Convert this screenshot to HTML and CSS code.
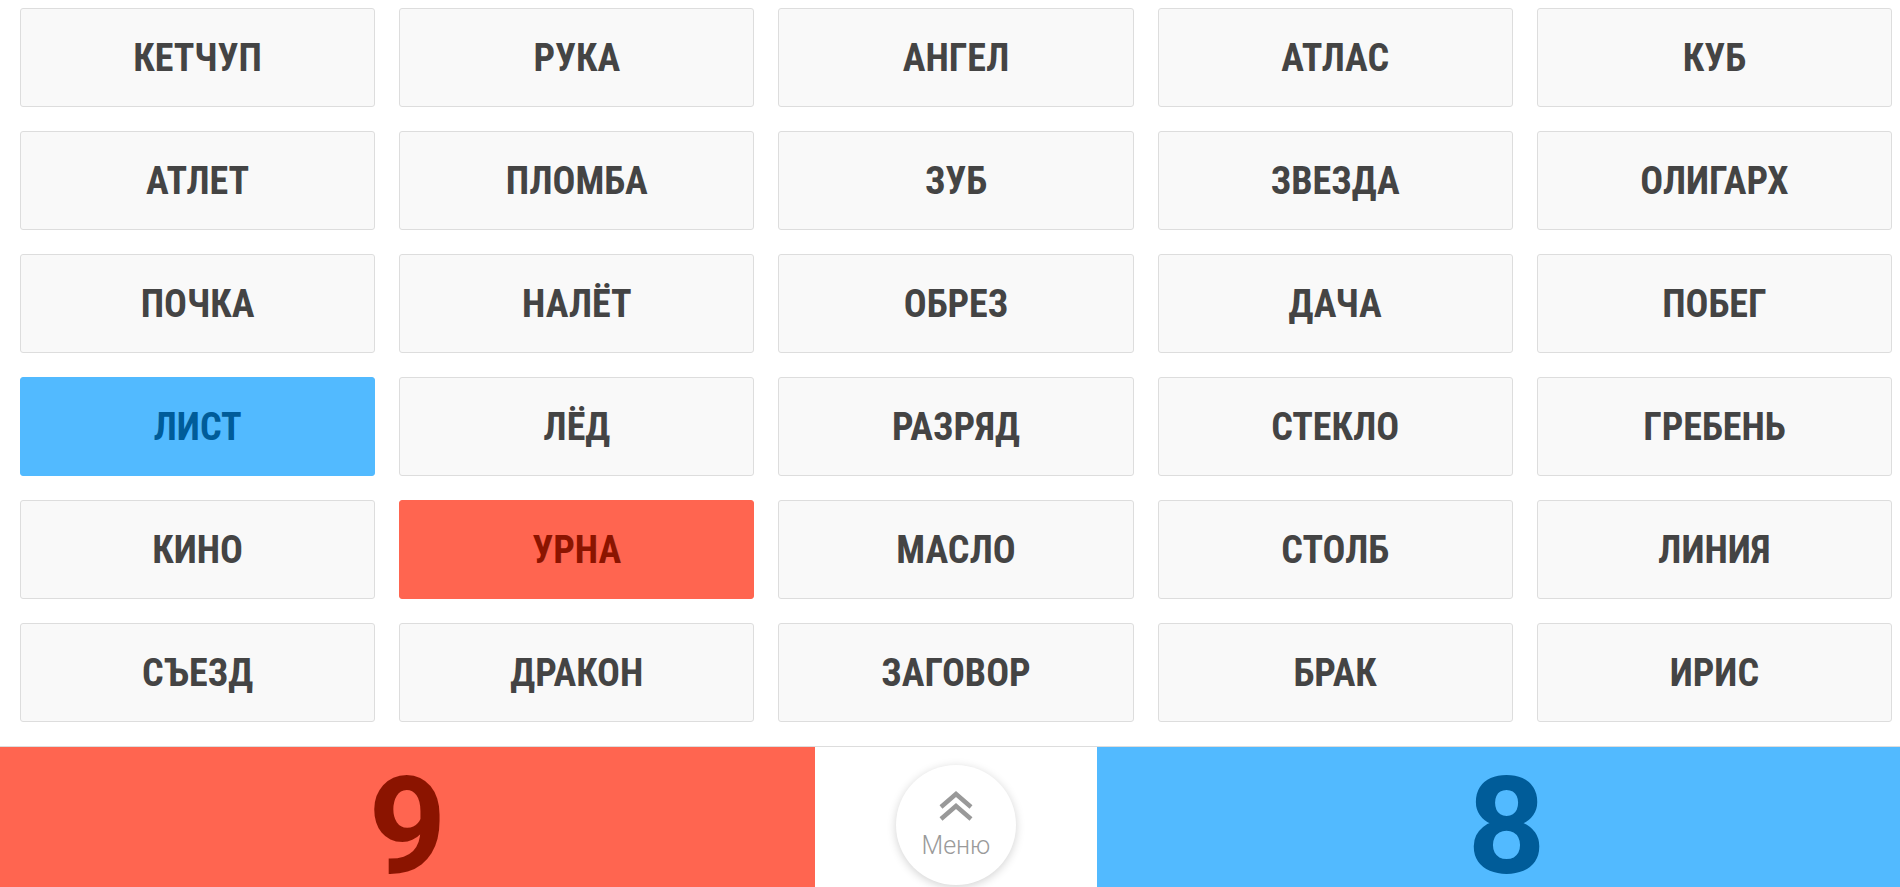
FILE: index.html
```html
<!DOCTYPE html>
<html lang="ru">
<head>
    <meta charset="UTF-8">
    <title>Коднеймс</title>
    <link rel="stylesheet" href="styles.css">
</head>
<body>
    <div class="board">
        <div class="card">КЕТЧУП</div>
        <div class="card">РУКА</div>
        <div class="card">АНГЕЛ</div>
        <div class="card">АТЛАС</div>
        <div class="card">КУБ</div>

        <div class="card">АТЛЕТ</div>
        <div class="card">ПЛОМБА</div>
        <div class="card">ЗУБ</div>
        <div class="card">ЗВЕЗДА</div>
        <div class="card">ОЛИГАРХ</div>

        <div class="card">ПОЧКА</div>
        <div class="card">НАЛЁТ</div>
        <div class="card">ОБРЕЗ</div>
        <div class="card">ДАЧА</div>
        <div class="card">ПОБЕГ</div>

        <div class="card blue">ЛИСТ</div>
        <div class="card">ЛЁД</div>
        <div class="card">РАЗРЯД</div>
        <div class="card">СТЕКЛО</div>
        <div class="card">ГРЕБЕНЬ</div>

        <div class="card">КИНО</div>
        <div class="card red">УРНА</div>
        <div class="card">МАСЛО</div>
        <div class="card">СТОЛБ</div>
        <div class="card">ЛИНИЯ</div>

        <div class="card">СЪЕЗД</div>
        <div class="card">ДРАКОН</div>
        <div class="card">ЗАГОВОР</div>
        <div class="card">БРАК</div>
        <div class="card">ИРИС</div>
    </div>

    <div class="score-bar">
        <div class="score red-score">9</div>
        <div class="menu-wrap">
            <button class="menu-btn" type="button">
                <svg width="34" height="30" viewBox="0 0 34 30">
                    <polyline points="2,16 17,3 32,16" fill="none" stroke="#999999" stroke-width="4.5"/>
                    <polyline points="2,28 17,15 32,28" fill="none" stroke="#999999" stroke-width="4.5"/>
                </svg>
                <span>Меню</span>
            </button>
        </div>
        <div class="score blue-score">8</div>
    </div>
</body>
</html>
```

FILE: styles.css
```css
html, body {
    margin: 0;
    padding: 0;
    height: 100%;
    background-color: #ffffff;
    font-family: Roboto, "Noto Sans", sans-serif;
}

body {
    display: flex;
    flex-direction: column;
    overflow: hidden;
}

.board {
    display: grid;
    grid-template-columns: repeat(5, 1fr);
    grid-auto-rows: 99px;
    gap: 24px 24px;
    padding: 8px 8px 24px 20px;
}

.card {
    box-sizing: border-box;
    display: flex;
    align-items: center;
    justify-content: center;
    background-color: #f9f9f9;
    border: 1px solid #dddddd;
    border-radius: 3px;
    color: #444444;
    font-family: "Roboto Condensed", Roboto, sans-serif;
    font-stretch: 75%;
    font-weight: 700;
    font-size: 38px;
}

.card.blue {
    background-color: #52baff;
    border-color: #52baff;
    color: #005c99;
}

.card.red {
    background-color: #ff6550;
    border-color: #ff6550;
    color: #8b1400;
}

.score-bar {
    flex: 1;
    display: grid;
    grid-template-columns: 815px 282px 1fr;
    border-top: 1px solid #dddddd;
}

.score {
    display: flex;
    align-items: flex-start;
    justify-content: center;
    padding-top: 30px;
    font-family: Roboto, sans-serif;
    font-weight: 700;
    font-size: 136px;
    line-height: 100px;
}

.red-score {
    background-color: #ff6550;
    color: #8b1400;
}

.blue-score {
    background-color: #52baff;
    color: #005c99;
    padding-left: 16px;
}

.menu-wrap {
    display: flex;
    justify-content: center;
    padding-top: 18px;
}

.menu-btn {
    width: 120px;
    height: 120px;
    border: none;
    border-radius: 50%;
    background-color: #ffffff;
    box-shadow: 0 2px 10px rgba(0, 0, 0, 0.18);
    display: flex;
    flex-direction: column;
    align-items: center;
    padding: 26px 0 0 0;
    cursor: pointer;
}

.menu-btn span {
    margin-top: 11px;
    font-family: Roboto, sans-serif;
    font-weight: 300;
    font-size: 25px;
    line-height: 28px;
    color: #9a9a9a;
}
```
